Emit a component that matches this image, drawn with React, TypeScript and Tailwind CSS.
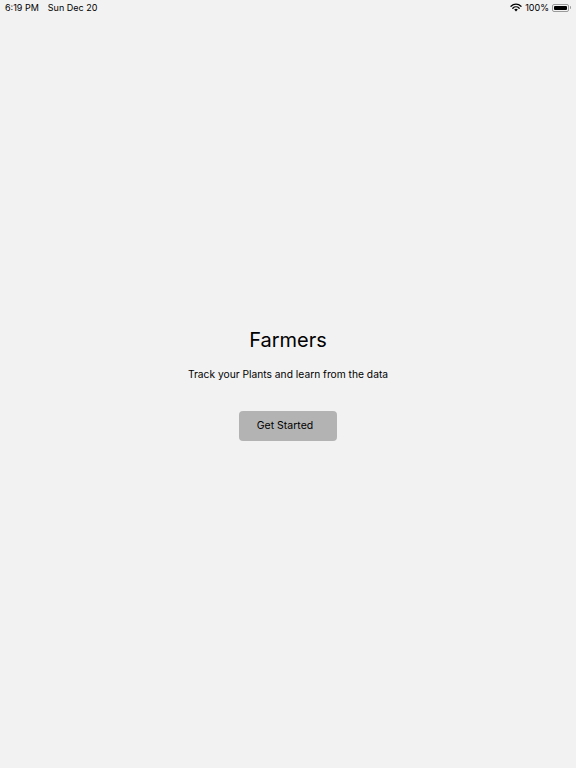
export default function App() {
  return (
    <div className="flex h-[768px] w-[576px] flex-col bg-[#f2f2f2] font-['Inter',sans-serif] text-black">
      <div className="flex h-[15px] items-center justify-between px-[5px] text-[9px] leading-none">
        <div className="flex gap-[9px]">
          <span>6:19 PM</span>
          <span>Sun Dec 20</span>
        </div>
        <div className="flex items-center gap-[3px]">
          <svg width="12" height="9" viewBox="0 0 12 9">
            <path d="M6 8.5 L4.2 6.6 A2.6 2.6 0 0 1 7.8 6.6 Z" fill="#000" />
            <path d="M2.8 5.2 A4.6 4.6 0 0 1 9.2 5.2" stroke="#000" strokeWidth="1.3" fill="none" strokeLinecap="round" />
            <path d="M1 3.2 A7.2 7.2 0 0 1 11 3.2" stroke="#000" strokeWidth="1.3" fill="none" strokeLinecap="round" />
          </svg>
          <span>100%</span>
          <div className="flex items-center">
            <div className="h-[8px] w-[17px] rounded-[2px] border border-[#9a9a9a] p-[1px]">
              <div className="h-full w-full rounded-[1px] bg-black" />
            </div>
            <div className="ml-[1px] h-[3px] w-[1px] rounded-r bg-[#9a9a9a]" />
          </div>
        </div>
      </div>

      <div className="flex flex-1 flex-col items-center pt-[311px]">
        <h1 className="text-[20px] leading-[28px]">Farmers</h1>
        <p className="mt-[14px] text-[10.25px] leading-[13px]">Track your Plants and learn from the data</p>
        <button
          type="button"
          className="mt-[30px] h-[30px] w-[98px] rounded-[4px] bg-[#b3b3b3] pr-[6px] text-[10.5px] text-black"
        >
          Get Started
        </button>
      </div>
    </div>
  );
}
